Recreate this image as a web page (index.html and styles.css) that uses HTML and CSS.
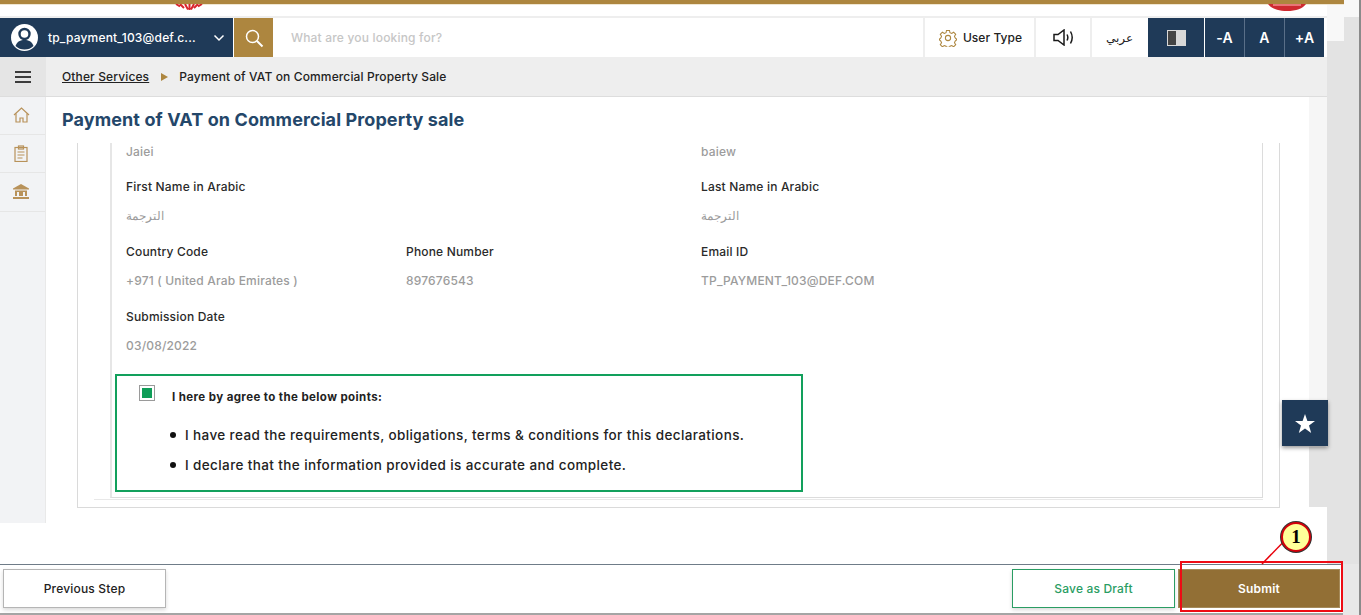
FILE: index.html
```html
<!DOCTYPE html>
<html lang="en">
<head>
<meta charset="utf-8">
<title>Payment of VAT on Commercial Property sale</title>
<link rel="stylesheet" href="styles.css">
</head>
<body>
<div class="page">
  <div class="upper">
    <div class="main">
      <div class="strip"></div>
      <div class="logo-row">
        <svg class="logo-left" width="28" height="6" viewBox="0 0 28 6"><path d="M1 0l4 2.500M5 0l4 4M10 0l3 5.500M14.500 0v6M19 0l-3 5.500M23 0l-4 4M27 0l-4 2.500" stroke="#d9262c" stroke-width="2" fill="none"/></svg>
        <svg class="logo-right" width="38" height="8" viewBox="0 0 38 8"><path d="M0 0h38c-3 4.500-10 7-19 7S3 4.500 0 0z" fill="#cf2a30"/><path d="M5 1h28" stroke="#ef8f8f" stroke-width="1.500"/></svg>
      </div>
      <header class="hdr">
        <div class="user">
          <svg class="avatar" width="27" height="27" viewBox="0 0 27 27"><circle cx="13.500" cy="13.500" r="13.500" fill="#fff"/><circle cx="13.500" cy="10" r="5" fill="none" stroke="#1f3a58" stroke-width="2.400"/><path d="M4.500 22c1.500-4.500 5-6 9-6s7.500 1.500 9 6c-2.500 2.500-5.500 3.500-9 3.500s-6.500-1-9-3.500z" fill="#1f3a58"/></svg>
          <span class="user-name">tp_payment_103@def.c...</span>
          <svg class="chev" width="12" height="8" viewBox="0 0 12 8"><path d="M1.500 1.500L6 6l4.500-4.500" fill="none" stroke="#fff" stroke-width="1.500"/></svg>
        </div>
        <div class="search-btn">
          <svg width="20" height="20" viewBox="0 0 20 20"><circle cx="8.500" cy="8.500" r="6" fill="none" stroke="#fff" stroke-width="1.500"/><path d="M13 13l5.500 5.500" stroke="#fff" stroke-width="2"/></svg>
        </div>
        <div class="search-text">What are you looking for?</div>
        <div class="tool tool-user">
          <svg width="18" height="18" viewBox="0 0 24 24" fill="none" stroke="#ad863f" stroke-width="1.400"><circle cx="12" cy="12" r="3.500"/><path d="M10 2h4l.6 3 2.300 1 2.600-1.700 2.800 2.800-1.700 2.600 1 2.300 2.400 2-2.400 2-1 2.300 1.700 2.600-2.800 2.800-2.600-1.700-2.300 1-.6 1.300h-4l-.6-1.300-2.300-1-2.600 1.700-2.800-2.800 1.700-2.600-1-2.300-2.400-2 2.400-2 1-2.300-1.700-2.600 2.800-2.800 2.600 1.700 2.300-1z"/></svg>
          <span>User Type</span>
        </div>
        <div class="tool tool-sound">
          <svg width="21" height="17" viewBox="0 0 21 17" fill="none" stroke="#1a1a1a" stroke-width="1.500"><path d="M1 5.500h4L11 1v15l-6-4.500H1z"/><path d="M14 5.500c1 1.800 1 4.200 0 6M17.500 2.500c2 3.500 2 8.500 0 12"/></svg>
        </div>
        <div class="tool tool-lang" lang="ar">عربي</div>
        <div class="acc acc-contrast">
          <svg width="19" height="16" viewBox="0 0 19 16"><rect width="19" height="16" fill="#d8d8d8"/><rect x="1" y="1" width="8" height="14" fill="#444"/></svg>
        </div>
        <div class="acc acc-a">-A</div>
        <div class="acc acc-a">A</div>
        <div class="acc acc-a">+A</div>
      </header>
      <nav class="crumb">
        <div class="burger"><span></span><span></span><span></span></div>
        <a class="crumb-link">Other Services</a>
        <span class="crumb-arrow"></span>
        <span class="crumb-cur">Payment of VAT on Commercial Property Sale</span>
      </nav>
      <div class="body">
        <aside class="side">
          <div class="side-item">
            <svg width="17" height="16" viewBox="0 0 17 16" fill="none" stroke="#b8925a" stroke-width="1.200"><path d="M1 8l7.500-7L16 8"/><path d="M3 6.500V15h4v-4h3v4h4V6.500"/></svg>
          </div>
          <div class="side-item">
            <svg width="14" height="17" viewBox="0 0 14 17" fill="none" stroke="#b8925a" stroke-width="1.200"><rect x="1" y="2.500" width="12" height="14"/><rect x="4.500" y="1" width="5" height="3"/><path d="M3.500 7h7M3.500 10h7M3.500 13h5"/></svg>
          </div>
          <div class="side-item">
            <svg width="16" height="15" viewBox="0 0 16 15"><path d="M8 0l8 4.500v1H0v-1z" fill="#b8925a"/><path d="M2 6.500h12V12H2z" fill="#b8925a"/><path d="M4 8h2v4H4zM10 8h2v4h-2z" fill="#f2f3f5"/><path d="M0 13h16v2H0z" fill="#b8925a"/></svg>
          </div>
        </aside>
        <main class="content">
          <h1 class="title">Payment of VAT on Commercial Property sale</h1>
          <div class="scroller">
            <div class="outer">
              <div class="mid">
                <div class="inner">
                  <div class="fields">
                    <div class="row row-first">
                      <div class="field"><div class="val">Jaiei</div></div>
                      <div class="field"></div>
                      <div class="field"><div class="val">baiew</div></div>
                    </div>
                    <div class="row">
                      <div class="field"><div class="lab">First Name in Arabic</div><div class="val" lang="ar">الترجمة</div></div>
                      <div class="field"></div>
                      <div class="field"><div class="lab">Last Name in Arabic</div><div class="val" lang="ar">الترجمة</div></div>
                    </div>
                    <div class="row">
                      <div class="field"><div class="lab">Country Code</div><div class="val">+971 ( United Arab Emirates )</div></div>
                      <div class="field"><div class="lab">Phone Number</div><div class="val">897676543</div></div>
                      <div class="field"><div class="lab">Email ID</div><div class="val">TP_PAYMENT_103@DEF.COM</div></div>
                    </div>
                    <div class="row">
                      <div class="field"><div class="lab">Submission Date</div><div class="val">03/08/2022</div></div>
                    </div>
                  </div>
                  <section class="agree">
                    <div class="agree-head">
                      <span class="check"><span class="check-fill"></span></span>
                      <strong>I here by agree to the below points:</strong>
                    </div>
                    <ul class="points">
                      <li>I have read the requirements, obligations, terms &amp; conditions for this declarations.</li>
                      <li>I declare that the information provided is accurate and complete.</li>
                    </ul>
                  </section>
                </div>
              </div>
            </div>
          </div>
        </main>
        <div class="gutter"></div>
      </div>
      <div class="spacer"></div>
    </div>
    <div class="scroll">
      <div class="scroll-top"></div>
      <div class="scroll-notch"></div>
    </div>
  </div>
  <footer class="foot">
    <div class="foot-inner">
      <button class="btn btn-prev">Previous Step</button>
      <button class="btn btn-draft">Save as Draft</button>
      <button class="btn btn-submit">Submit</button>
    </div>
  </footer>
  <div class="star-tab">
    <svg width="20" height="19" viewBox="0 0 20 19"><path d="M10 0l2.400 6.900 7.600.2-6 4.500 2.200 7.400-6.200-4.400-6.200 4.400 2.200-7.400-6-4.500 7.600-.2z" fill="#fff"/></svg>
  </div>
  <div class="red-box"></div>
  <svg class="leader" width="50" height="40" viewBox="0 0 50 40"><path d="M4 38L37 4" stroke="#e8000b" stroke-width="1.500"/></svg>
  <div class="callout">1</div>
</div>
</body>
</html>
```
FILE: styles.css
```css
* { box-sizing: border-box; }
html, body { margin: 0; padding: 0; }
body { font-family: "Inter", "Noto Sans", "Noto Sans CJK SC", sans-serif; font-size: 12px; letter-spacing: .18px; color: #222; }
.page { position: relative; width: 1361px; height: 615px; overflow: hidden; background: #e8e8e8; display: flex; flex-direction: column; border-right: 2px solid #8a8a8a; }

.upper { display: flex; height: 564px; flex: none; }
.main { width: 1327px; flex: none; display: flex; flex-direction: column; background: #fff; }
.strip { position: relative; height: 5px; flex: none; background: #ad863f; border-bottom: 1px solid #efe6d2; margin-right: -17px; }
.logo-row { height: 13px; flex: none; position: relative; border-bottom: 2px solid #eeeeee; }
.logo-left { position: absolute; left: 175px; top: -1px; }
.logo-right { position: absolute; left: 1268px; top: -1px; }

.hdr { height: 39px; flex: none; display: flex; align-items: stretch; background: #fff; }
.user { width: 233px; flex: none; background: #1f3a58; display: flex; align-items: center; padding-left: 11px; color: #fff; }
.user-name { margin-left: 10px; font-weight: 500; white-space: nowrap; width: 165px; }
.search-btn { width: 39px; flex: none; margin-left: 1px; background: #ad863f; display: flex; align-items: center; justify-content: center; }
.search-text { width: 650px; flex: none; padding-left: 18px; display: flex; align-items: center; font-weight: 500; color: #c6c6c6; }
.tool { flex: none; display: flex; align-items: center; justify-content: center; border-left: 2px solid #eeeeee; font-weight: 500; color: #222; }
.tool-user { width: 111px; gap: 6px; letter-spacing: .05px; padding-left: 2px; }
.tool-sound { width: 56px; }
.tool-lang { width: 57px; font-size: 12px; font-family: "Noto Sans", "DejaVu Sans", sans-serif; font-weight: 400; }
.acc { flex: none; background: #1f3a58; color: #fff; display: flex; align-items: center; justify-content: center; font-size: 14px; font-weight: 600; }
.acc-contrast { width: 56px; margin-left: 1px; }
.acc-a { width: 40px; border-left: 1px solid #5a6f88; }
.acc-contrast + .acc-a { border-left: 1px solid #fff; }

.crumb { height: 40px; flex: none; display: flex; align-items: center; background: #eeeeee; border-bottom: 1px solid #dddddd; font-weight: 500; letter-spacing: .13px; }
.burger { width: 46px; height: 100%; flex: none; background: #e5e5e5; display: flex; flex-direction: column; align-items: center; justify-content: center; gap: 3px; margin-right: 16px; }
.burger span { width: 16px; height: 2px; background: #3c3c3c; }
.crumb-link { color: #222; text-decoration: underline; }
.crumb-arrow { width: 0; height: 0; border-left: 7px solid #ad863f; border-top: 4px solid transparent; border-bottom: 4px solid transparent; margin: 0 11px 0 12px; }
.crumb-cur { color: #222; }

.body { height: 426px; flex: none; display: flex; }
.side { width: 46px; flex: none; background: #f2f3f5; border-right: 1px solid #e9e9e9; }
.side-item { height: 38.500px; display: flex; align-items: center; justify-content: center; border-bottom: 1px solid #e6e6e6; padding-right: 3px; }
.side-item:first-child { height: 37.500px; }
.content { flex: 1; min-width: 0; display: flex; flex-direction: column; }
.title { height: 46px; flex: none; margin: 0; padding: 0 0 2px 16px; display: flex; align-items: center; font-size: 18px; font-weight: 700; letter-spacing: .1px; color: #24476a; }
.scroller { height: 365px; flex: none; overflow: hidden; }
.outer { margin-left: 31px; width: 1203px; border: 1px solid #dadada; border-top: 0; padding: 0 16px 7px 16px; }
.mid { border-bottom: 1px solid #e8e8e8; padding: 0 0 1px 16px; }
.inner { border: 1px solid #dcdcdc; border-top: 0; border-left-width: 2px; border-left-color: #e6e6e6; padding: 0 0 5px 3px; }
.fields { padding-left: 11px; }
.row { display: grid; grid-template-columns: 280px 295px 1fr; padding-top: 13px; height: 65px; }
.row-first { height: 23px; padding-top: 1px; }
.lab { font-weight: 500; line-height: 16px; color: #2a2a2a; }
.val { line-height: 16px; margin-top: 13px; color: #9c9c9c; font-weight: 500; }
.row-first .val { margin-top: 0; }

.agree { width: 688px; height: 118px; margin-top: 13px; border: 2px solid #12a05c; position: relative; }
.agree-head { display: flex; align-items: center; height: 16px; margin-top: 9px; padding-left: 22px; }
.agree-head strong { margin-left: 17px; margin-top: 8px; font-size: 11.500px; font-weight: 700; letter-spacing: .4px; color: #222; }
.check { width: 16px; height: 16px; border: 1px solid #9a9a9a; background: #fff; display: flex; align-items: center; justify-content: center; }
.check-fill { width: 10px; height: 10px; background: #0f9d58; }
.points { margin: 19px 0 0; padding: 0 0 0 68px; list-style: none; font-size: 13.500px; letter-spacing: .39px; font-weight: 500; color: #222; }
.points li { position: relative; height: 30px; line-height: 30px; white-space: nowrap; }
.points li::before { content: ""; position: absolute; left: -15px; top: 12px; width: 6px; height: 6px; border-radius: 50%; background: #111; }

.gutter { width: 18px; flex: none; height: 410px; background: #f6f6f6; box-shadow: inset 0 -60px 0 #e3e3e3; }
.spacer { flex: 1; background: #fff; }
.scroll { flex: 1; background: #e3e3e3; }
.scroll-top { height: 17px; background: #f8f8f8; }
.scroll-notch { width: 17px; height: 24px; background: #f8f8f8; }

.foot { flex: 1; display: flex; }
.foot-inner { width: 1343px; height: 51px; background: #fff; border-top: 1px solid #6f7c88; border-bottom: 2px solid #a5a5a5; display: flex; align-items: flex-start; padding: 4px 0 0 3px; }
.btn { height: 39px; font-family: inherit; font-size: 12px; letter-spacing: inherit; font-weight: 500; border-radius: 0; cursor: pointer; }
.btn-prev { width: 163px; background: #fff; color: #222; border: 1px solid #b5b5b5; box-shadow: 0 2px 4px rgba(0,0,0,.15); }
.btn-draft { width: 163px; margin-left: auto; background: #fff; color: #2a9d63; border: 1px solid #2a9d63; box-shadow: 0 2px 4px rgba(0,0,0,.15); }
.btn-submit { width: 162px; margin-left: 3px; margin-right: 3px; background: #926f35; color: #fff; border: 1px solid #a58a5a; font-weight: 600; }

.star-tab { position: absolute; left: 1282px; top: 400px; width: 46px; height: 46px; background: #1f3a58; display: flex; align-items: center; justify-content: center; box-shadow: 0 2px 4px rgba(0,0,0,.4); }
.red-box { position: absolute; left: 1180px; top: 561px; width: 163px; height: 51px; border: 2px solid #ee0b14; }
.leader { position: absolute; left: 1258px; top: 526px; }
.callout { position: absolute; left: 1281px; top: 522px; width: 30px; height: 30px; border-radius: 50%; background: #ffff99; border: 2px solid #d3000a; box-shadow: 0 0 0 1px #333; display: flex; align-items: center; justify-content: center; font-family: "Liberation Serif", serif; font-weight: 700; font-size: 19px; color: #000; }
```
